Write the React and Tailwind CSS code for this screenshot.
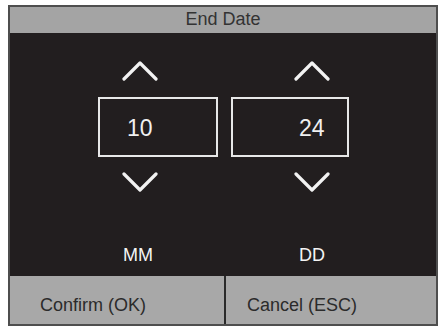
import React from 'react';

const Chevron = ({ down }) => (
  <svg width="36" height="22" viewBox="0 0 36 22" className="block">
    <polyline
      points={down ? '2,3 18,19 34,3' : '2,19 18,3 34,19'}
      fill="none"
      stroke="#f2f2f2"
      strokeWidth="3.2"
      strokeLinecap="round"
      strokeLinejoin="round"
    />
  </svg>
);

const Column = ({ value, label, boxWidth, arrowPad, textPad, labelPad }) => (
  <div className="flex flex-col" style={{ width: boxWidth }}>
    <div className="mt-[27px]" style={{ paddingLeft: arrowPad }}>
      <Chevron />
    </div>
    <div className="mt-[15px] h-[60px] border-2 border-[#e8e8e8] flex items-center pt-[2px] text-[23px] text-[#f0f0f0]" style={{ paddingLeft: textPad }}>
      {value}
    </div>
    <div className="mt-[14px]" style={{ paddingLeft: arrowPad }}>
      <Chevron down />
    </div>
    <div className="mt-[52px] text-[18px] leading-[20px] text-[#f4f4f4]" style={{ paddingLeft: labelPad }}>
      {label}
    </div>
  </div>
);

export default function App() {
  return (
    <div className="w-[443px] h-[329px] bg-white pt-[5px] pl-[8px]" style={{ fontFamily: '"Liberation Sans", Arial, sans-serif' }}>
      <div className="w-[430px] h-[321px] border-2 border-[#4e4e4e] flex flex-col">
        {/* Header */}
        <div className="h-[26px] bg-[#a4a4a4] flex items-center justify-center pb-[1px] text-[18px] text-[#333333]">
          End Date
        </div>

        {/* Body */}
        <div className="h-[243px] bg-[#221e1f] flex pl-[88px] gap-[13px]">
          <Column value="10" label="MM" boxWidth={120} arrowPad={24} textPad={27} labelPad={25} />
          <Column value="24" label="DD" boxWidth={118} arrowPad={63} textPad={66} labelPad={68} />
        </div>

        {/* Footer */}
        <div className="flex-1 flex bg-[#a8a8a8] text-[18px] text-[#2b2b2b]">
          <div className="w-[214px] flex items-center pl-[30px] pt-[10px]">Confirm (OK)</div>
          <div className="w-[2px] bg-[#2a2a2a]" />
          <div className="flex-1 flex items-center pl-[21px] pt-[10px]">Cancel (ESC)</div>
        </div>
      </div>
    </div>
  );
}
